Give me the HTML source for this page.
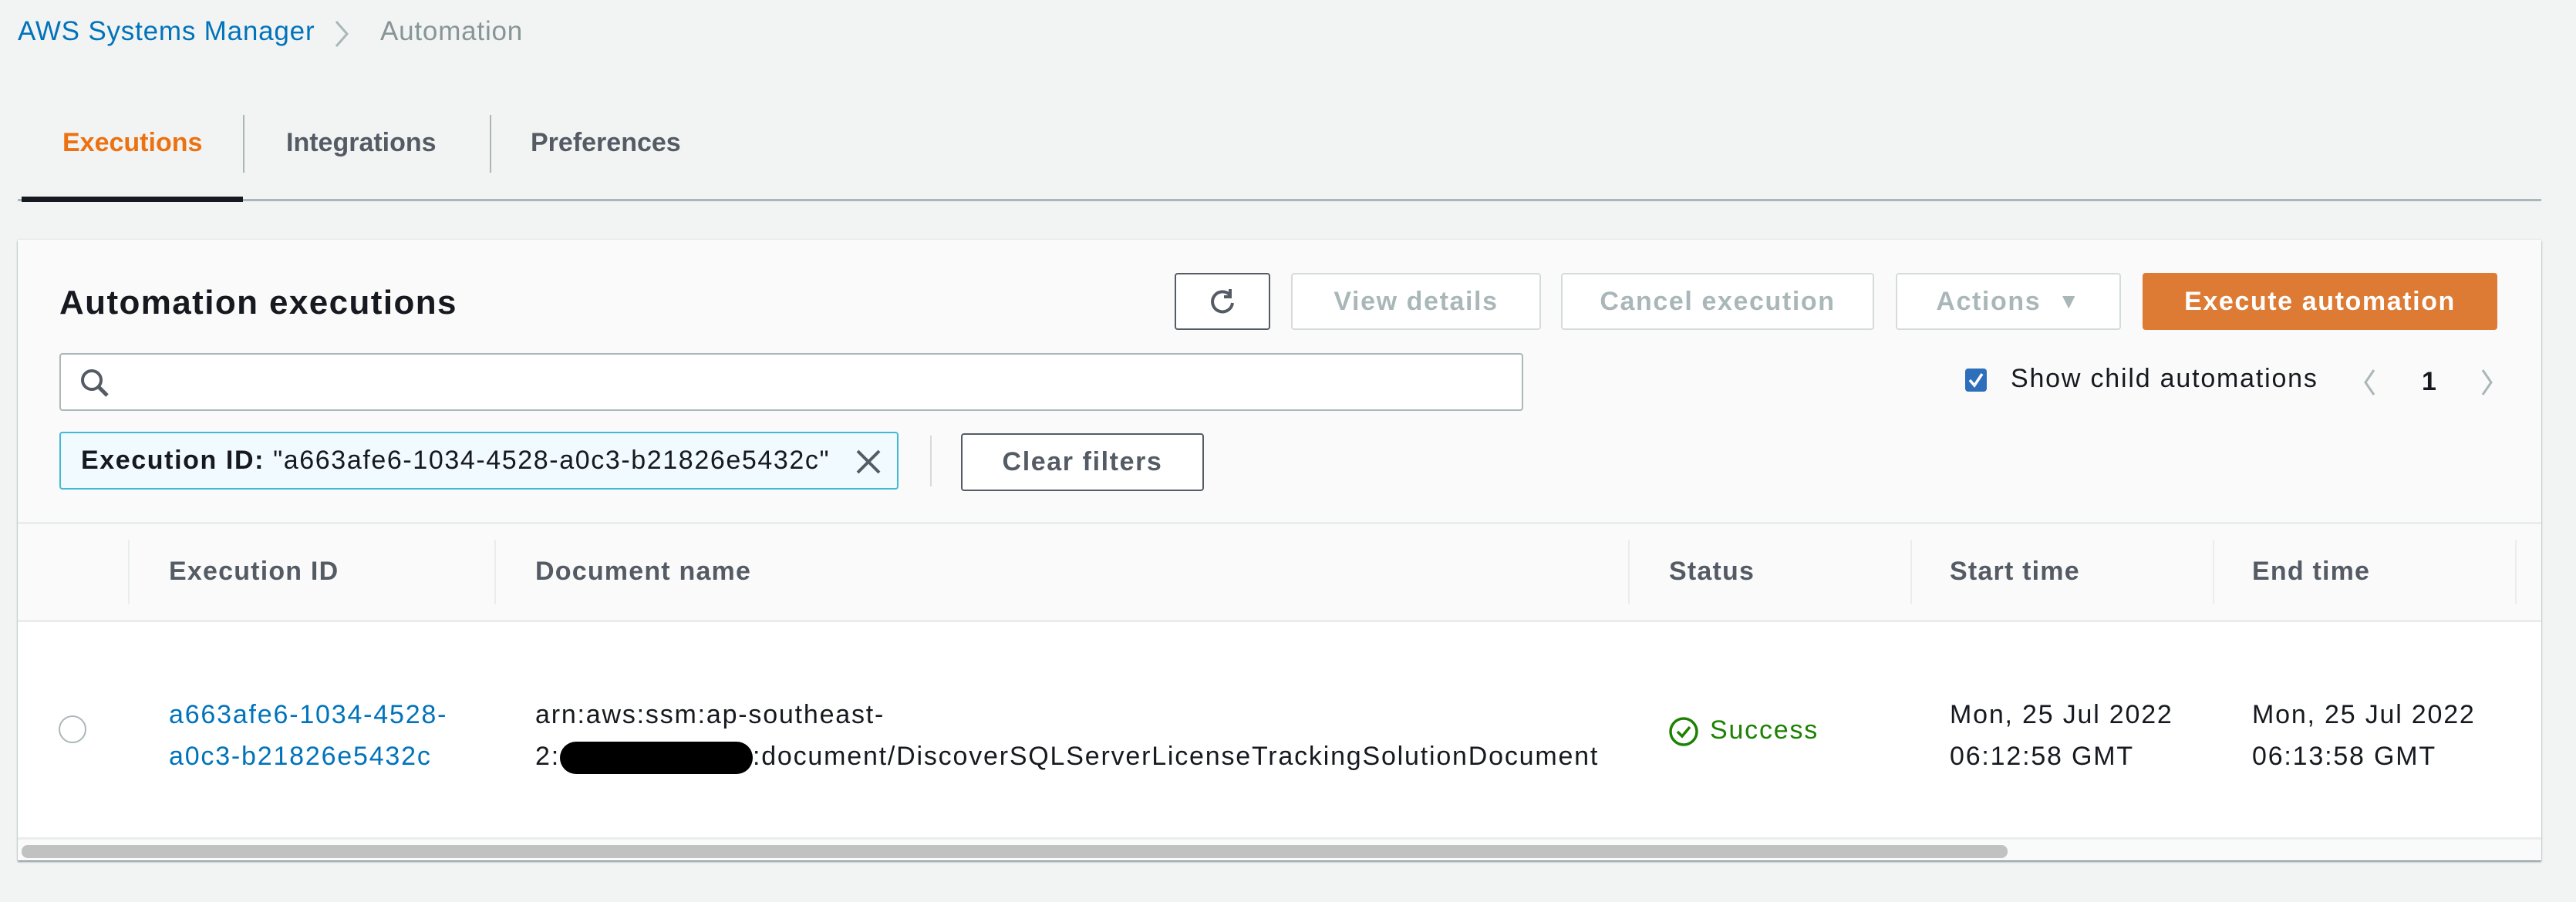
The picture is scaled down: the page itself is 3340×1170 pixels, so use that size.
<!DOCTYPE html>
<html><head><meta charset="utf-8"><style>
*{box-sizing:border-box;margin:0;padding:0}
body{width:3340px;height:1170px;background:#f2f3f3;font-family:"Liberation Sans",sans-serif;color:#16191f;position:relative;overflow:hidden;font-size:30px}
.a{position:absolute;white-space:nowrap}
.t{font-size:34px;letter-spacing:1.8px}
.btn{position:absolute;border:2px solid #d5dbdb;background:#fff;border-radius:4px;color:#aab7b8;font-weight:bold;font-size:34px;letter-spacing:1.6px;display:flex;align-items:center;justify-content:center}
.vl{position:absolute;width:2px;background:#eaeded}
.th{position:absolute;top:722px;font-weight:bold;color:#545b64;font-size:34px;letter-spacing:1.2px}
</style></head><body>
<div class="a" style="left:23px;top:21px;font-size:35px;letter-spacing:0.8px;color:#0073bb">AWS Systems Manager</div>
<svg class="a" style="left:432px;top:24px" width="24" height="40"><path d="M4 4 L18 20 L4 36" stroke="#aab7b8" stroke-width="3" fill="none"/></svg>
<div class="a" style="left:493px;top:21px;font-size:35px;letter-spacing:0.8px;color:#879596">Automation</div>

<div class="a" style="left:81px;top:166px;font-size:34px;font-weight:bold;color:#ec7211">Executions</div>
<div class="a" style="left:371px;top:166px;font-size:34px;font-weight:bold;color:#545b64">Integrations</div>
<div class="a" style="left:688px;top:166px;font-size:34px;font-weight:bold;color:#545b64">Preferences</div>
<div class="a" style="left:315px;top:149px;width:2px;height:75px;background:#aab7b8"></div>
<div class="a" style="left:635px;top:149px;width:2px;height:75px;background:#aab7b8"></div>
<div class="a" style="left:23px;top:258px;width:3272px;height:3px;background:#aab7b8"></div>
<div class="a" style="left:28px;top:255px;width:287px;height:7px;background:#16191f"></div>

<div class="a" style="left:23px;top:311px;width:3272px;height:805px;background:#fafafa;box-shadow:0 2px 2px #879596,0 0 2px #d5dbdb"></div>
<div class="a" style="left:77px;top:368px;font-size:44px;letter-spacing:1.4px;font-weight:bold">Automation executions</div>

<div class="btn" style="left:1523px;top:354px;width:124px;height:74px;border-color:#545b64">
<svg width="40" height="40" viewBox="0 0 40 40"><path d="M30 12 A13 13 0 1 0 33 22" stroke="#545b64" stroke-width="4" fill="none"/><path d="M30 4 L30 14 L22 14" stroke="#545b64" stroke-width="4" fill="none"/></svg></div>
<div class="btn" style="left:1674px;top:354px;width:324px;height:74px">View details</div>
<div class="btn" style="left:2024px;top:354px;width:406px;height:74px">Cancel execution</div>
<div class="btn" style="left:2458px;top:354px;width:292px;height:74px">Actions&nbsp;&nbsp;<span style="font-size:28px">▼</span></div>
<div class="btn" style="left:2778px;top:354px;width:460px;height:74px;background:#dd7a33;border-color:#dd7a33;color:#fff">Execute automation</div>

<div class="a" style="left:77px;top:458px;width:1898px;height:75px;background:#fff;border:2px solid #aab7b8;border-radius:4px"></div>
<svg class="a" style="left:101px;top:475px" width="44" height="44"><circle cx="18" cy="18" r="12" stroke="#545b64" stroke-width="4" fill="none"/><path d="M27 27 L38 38" stroke="#545b64" stroke-width="5"/></svg>

<div class="a" style="left:2548px;top:478px;width:28px;height:30px;background:#2d6fbb;border-radius:4px"></div>
<svg class="a" style="left:2550px;top:480px" width="24" height="26"><path d="M4 13 L10 20 L20 5" stroke="#fff" stroke-width="3.5" fill="none"/></svg>
<div class="a t" style="left:2607px;top:472px">Show child automations</div>
<svg class="a" style="left:3060px;top:474px" width="24" height="44"><path d="M18 6 L7 22 L18 38" stroke="#aab7b8" stroke-width="3" fill="none"/></svg>
<div class="a" style="left:3140px;top:476px;font-size:34px;font-weight:bold">1</div>
<svg class="a" style="left:3213px;top:474px" width="24" height="44"><path d="M6 6 L17 22 L6 38" stroke="#aab7b8" stroke-width="3" fill="none"/></svg>

<div class="a" style="left:77px;top:560px;width:1088px;height:75px;background:#f1faff;border:2px solid #44b9d6;border-radius:4px"></div>
<div class="a t" style="left:105px;top:578px;letter-spacing:1.6px"><b>Execution ID:</b> "a663afe6-1034-4528-a0c3-b21826e5432c"</div>
<svg class="a" style="left:1108px;top:581px" width="36" height="36"><path d="M4 4 L32 32 M32 4 L4 32" stroke="#545b64" stroke-width="4"/></svg>
<div class="a" style="left:1206px;top:565px;width:2px;height:66px;background:#d5dbdb"></div>
<div class="btn" style="left:1246px;top:562px;width:315px;height:75px;border-color:#545b64;color:#545b64">Clear filters</div>

<div class="a" style="left:23px;top:677px;width:3272px;height:3px;background:#eaeded"></div>
<div class="vl" style="left:166px;top:700px;height:84px"></div>
<div class="vl" style="left:641px;top:700px;height:84px"></div>
<div class="vl" style="left:2111px;top:700px;height:84px"></div>
<div class="vl" style="left:2477px;top:700px;height:84px"></div>
<div class="vl" style="left:2869px;top:700px;height:84px"></div>
<div class="vl" style="left:3261px;top:700px;height:84px"></div>
<div class="th" style="left:219px">Execution ID</div>
<div class="th" style="left:694px">Document name</div>
<div class="th" style="left:2164px">Status</div>
<div class="th" style="left:2528px">Start time</div>
<div class="th" style="left:2920px">End time</div>
<div class="a" style="left:23px;top:804px;width:3272px;height:285px;background:#fff;border-top:3px solid #eaeded;border-bottom:3px solid #eaeded"></div>

<div class="a" style="left:76px;top:928px;width:36px;height:36px;border:2px solid #aab7b8;border-radius:50%;background:#fff"></div>
<div class="a t" style="left:219px;top:900px;line-height:54px;color:#0073bb">a663afe6-1034-4528-<br>a0c3-b21826e5432c</div>
<div class="a t" style="left:694px;top:900px;line-height:54px">arn:aws:ssm:ap-southeast-<br>2:<span style="display:inline-block;width:250px;height:42px;background:#000;border-radius:21px;vertical-align:middle"></span>:document/DiscoverSQLServerLicenseTrackingSolutionDocument</div>
<svg class="a" style="left:2163px;top:929px" width="40" height="40"><circle cx="20" cy="20" r="17" stroke="#1d8102" stroke-width="3.5" fill="none"/><path d="M12 20 L18 26 L28 14" stroke="#1d8102" stroke-width="3.5" fill="none"/></svg>
<div class="a t" style="left:2217px;top:928px;color:#1d8102">Success</div>
<div class="a t" style="left:2528px;top:900px;line-height:54px">Mon, 25 Jul 2022<br>06:12:58 GMT</div>
<div class="a t" style="left:2920px;top:900px;line-height:54px">Mon, 25 Jul 2022<br>06:13:58 GMT</div>

<div class="a" style="left:28px;top:1096px;width:2575px;height:17px;background:#c1c1c1;border-radius:8px"></div>
</body></html>
